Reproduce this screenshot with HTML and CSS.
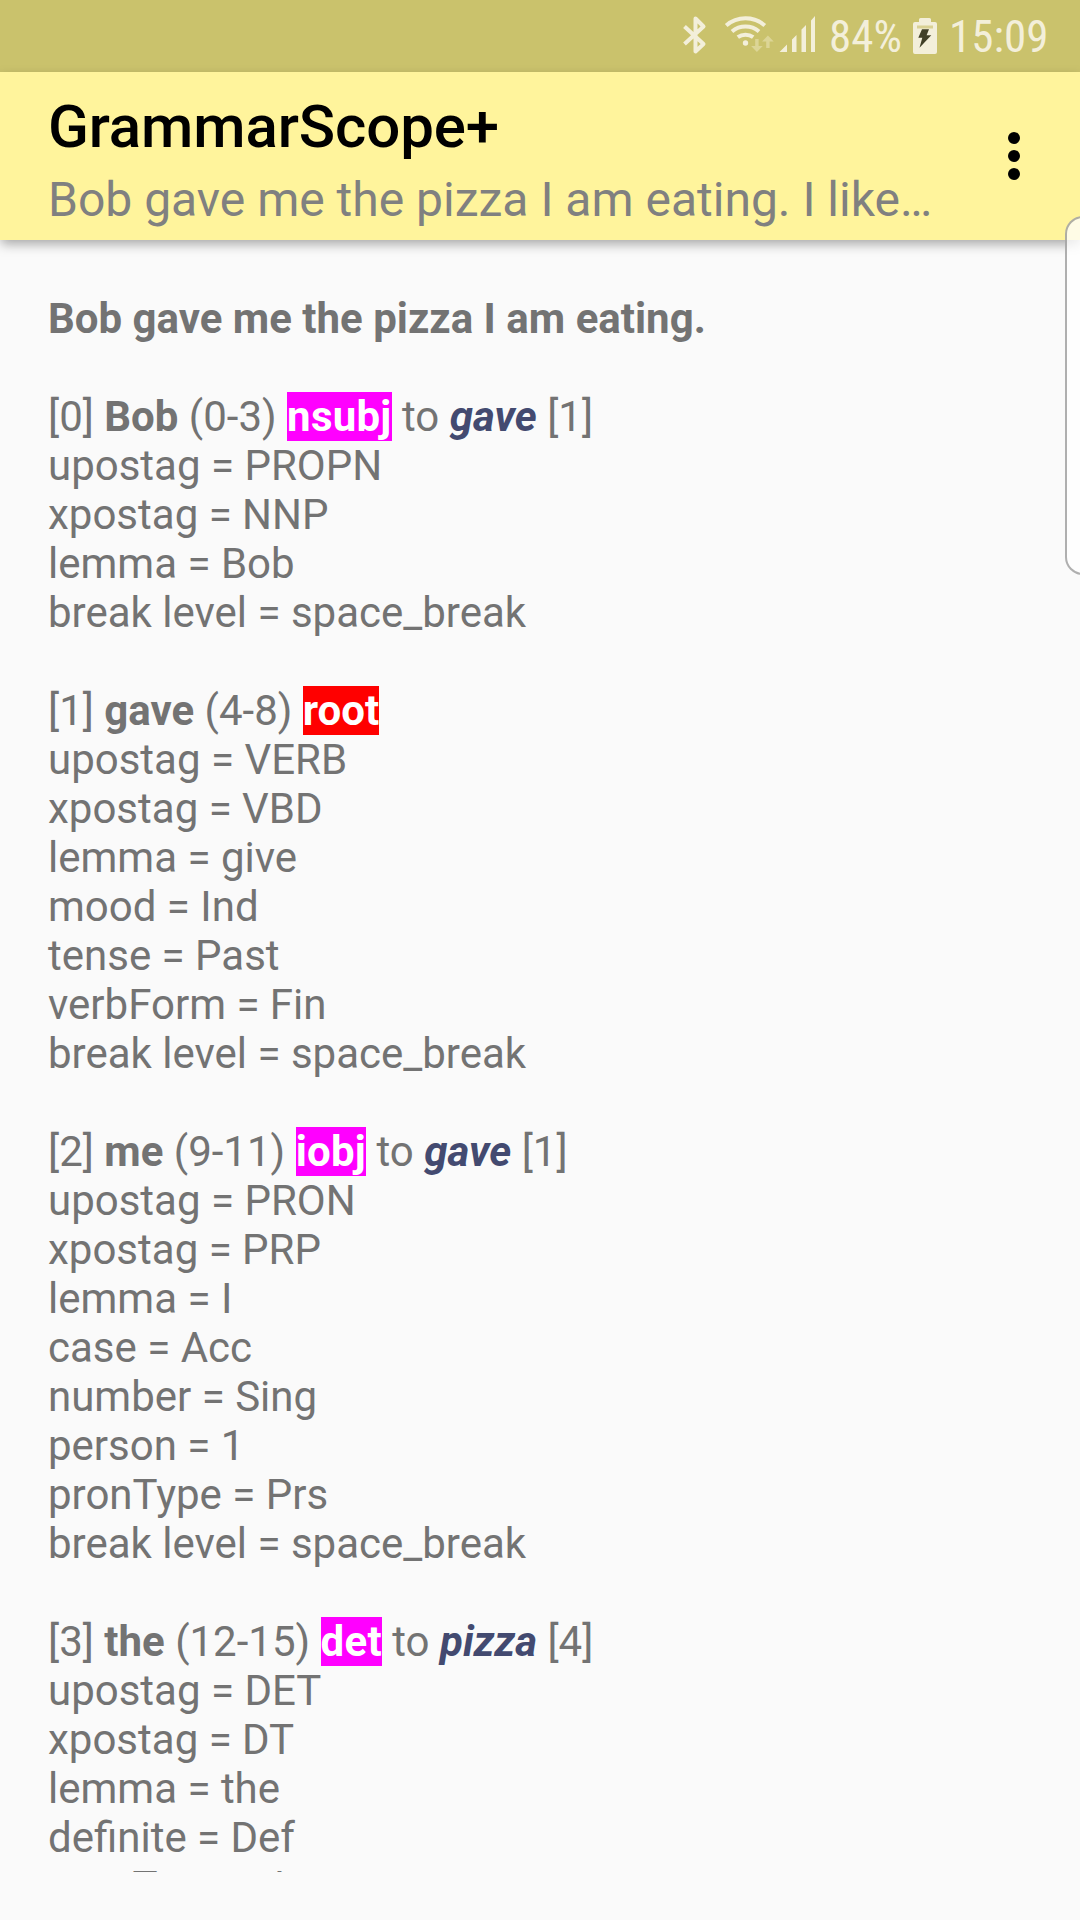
FILE: index.html
```html
<!DOCTYPE html>
<html lang="en">
<head>
<meta charset="utf-8">
<title>GrammarScope+</title>
<link rel="stylesheet" href="styles.css">
</head>
<body>
<div class="screen">
  <div class="status-bar">
    <svg class="status-icons" width="156" height="72" viewBox="0 0 156 72" aria-hidden="true">
      <path class="stroke" d="M4.500 26.500 23.500 44 15.500 51.500V18.500L23.500 26.500 4.500 44" stroke-width="4" stroke-linejoin="round"/>
      <g class="stroke" stroke-width="4">
        <path d="M46.200 25.500A29.500 29.500 0 0 1 84.800 25.500"/>
        <path d="M52 31.500A21 21 0 0 1 79 31.500"/>
        <path d="M57.800 37.200A13 13 0 0 1 73.200 37.200"/>
      </g>
      <circle class="fill" cx="65.500" cy="43" r="2.700"/>
      <g class="arrows">
        <path d="M75.200 39h3.400v7h4.100l-5.800 6-5.800-6h4.100z"/>
        <path d="M86.200 48h3.400v-6.500h4.100l-5.800-6-5.800 6h4.100z"/>
      </g>
      <path class="fill" d="M99.500 52 107 44.500V52zM112 39.500l4.500-4.500V52H112zM121.500 29.500l4.500-4.500V52h-4.500zM131 20.500l4-4.500V52h-4z"/>
    </svg>
    <span class="status-text percent">84%</span>
    <svg class="battery" width="24" height="36" viewBox="0 0 24 36" aria-hidden="true">
      <path class="fill" d="M6 4V1.500Q6 0 7.500 0h9Q18 0 18 1.500V4h4q2 0 2 2v28q0 2-2 2H2q-2 0-2-2V6q0-2 2-2z"/>
      <path class="slot" d="M4 7.500h16v3H4z"/>
      <path class="bolt" d="M9 11.300h7l-2.400 6h4.700L6.500 29.700l2.800-10H5.300z"/>
    </svg>
    <span class="status-text clock">15:09</span>
  </div>
  <header class="app-bar">
    <div class="titles">
      <h1 class="title">GrammarScope+</h1>
      <p class="subtitle">Bob gave me the pizza I am eating. I like…</p>
    </div>
    <div class="overflow-menu"><i class="dot"></i><i class="dot"></i><i class="dot"></i></div>
  </header>
  <main class="content">
    <p class="block sentence">Bob gave me the pizza I am eating.</p>
    <p class="block">[0] <b>Bob</b> (0-3) <b class="tag">nsubj</b> to <b class="ref">gave</b> [1]
upostag = PROPN
xpostag = NNP
lemma = Bob
break level = space_break</p>
    <p class="block">[1] <b>gave</b> (4-8) <b class="tag root">root</b>
upostag = VERB
xpostag = VBD
lemma = give
mood = Ind
tense = Past
verbForm = Fin
break level = space_break</p>
    <p class="block">[2] <b>me</b> (9-11) <b class="tag">iobj</b> to <b class="ref">gave</b> [1]
upostag = PRON
xpostag = PRP
lemma = I
case = Acc
number = Sing
person = 1
pronType = Prs
break level = space_break</p>
    <p class="block">[3] <b>the</b> (12-15) <b class="tag">det</b> to <b class="ref">pizza</b> [4]
upostag = DET
xpostag = DT
lemma = the
definite = Def
pronType = Art</p>
  </main>
  <div class="edge-handle"></div>
</div>
</body>
</html>
```
FILE: styles.css
```css
body {
  margin: 0;
}

.screen {
  position: relative;
  display: flex;
  flex-direction: column;
  width: 1080px;
  height: 1920px;
  overflow: hidden;
  background: #fafafa;
  font-family: Roboto, sans-serif;
  font-size: 42px;
  line-height: 49px;
  color: #737373;
}

.status-bar {
  display: flex;
  align-items: center;
  flex: none;
  height: 72px;
  padding-left: 680px;
  background: #cac26c;
  color: #f3efda;
}

.status-icons,
.battery {
  flex: none;
}

.status-icons {
  margin-right: -7px;
}

.stroke {
  fill: none;
  stroke: #f3efda;
}

.fill {
  fill: #f3efda;
}

.arrows {
  fill: #dcd596;
}

.slot {
  fill: #d9d193;
}

.bolt {
  fill: #414027;
}

.status-text {
  flex: none;
  padding-top: 2px;
  font-family: "Roboto Condensed", Roboto, sans-serif;
  font-stretch: 75%;
  font-size: 45px;
  line-height: 70px;
  white-space: nowrap;
}

.percent {
  width: 84px;
}

.clock {
  margin-left: 12px;
}

.app-bar {
  position: relative;
  z-index: 1;
  display: flex;
  flex: none;
  box-sizing: border-box;
  height: 168px;
  padding: 20px 60px 0 48px;
  justify-content: space-between;
  background: #fff49c;
  box-shadow: 0 5px 11px -1px rgba(0, 0, 0, 0.34);
}

.title {
  margin: 0;
  font-size: 60px;
  font-weight: 500;
  line-height: 70px;
  letter-spacing: -0.1px;
  color: #000;
}

.subtitle {
  margin: 10px 0 0;
  font-size: 48px;
  line-height: 56px;
  color: #808080;
}

.overflow-menu {
  display: flex;
  flex-direction: column;
  gap: 6px;
  margin-top: 40px;
}

.dot {
  width: 12px;
  height: 12px;
  border-radius: 50%;
  background: #000;
}

.content {
  flex: none;
  box-sizing: border-box;
  height: 1632px;
  padding: 54px 48px 0;
  overflow: hidden;
}

.block {
  margin: 0 0 49px;
  white-space: pre-line;
}

.sentence {
  font-weight: 700;
}

.tag {
  background: #f0f;
  color: #fff;
  letter-spacing: 0.25px;
}

.root {
  background: #f00;
  letter-spacing: 0;
}

.ref {
  font-style: italic;
  color: #434a70;
}

.edge-handle {
  position: absolute;
  z-index: 2;
  top: 216px;
  left: 1065px;
  box-sizing: border-box;
  width: 40px;
  height: 359px;
  border: 2px solid rgba(110, 110, 110, 0.55);
  border-radius: 18px;
  background: rgba(255, 255, 255, 0.75);
}
```
